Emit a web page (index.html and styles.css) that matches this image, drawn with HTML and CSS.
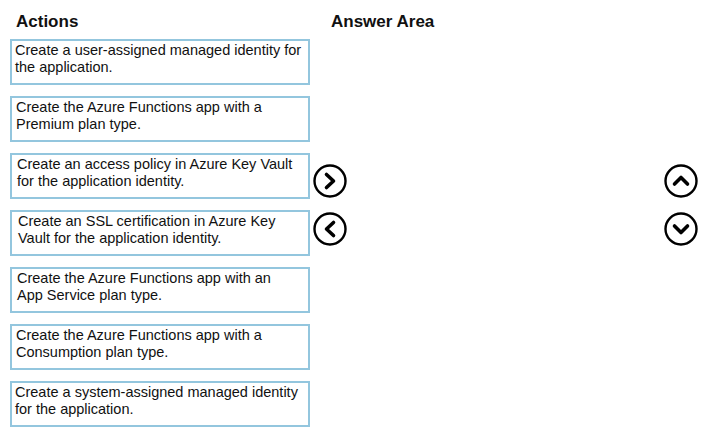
FILE: index.html
```html
<!DOCTYPE html>
<html>
<head>
<meta charset="utf-8">
<link rel="stylesheet" href="styles.css">
</head>
<body>
<div class="page">
  <section class="actions">
    <h2 class="title">Actions</h2>
    <ul class="list">
      <li class="item">Create a user-assigned managed identity for the application.</li>
      <li class="item item--in1">Create the Azure Functions app with a Premium plan type.</li>
      <li class="item item--in2">Create an access policy in Azure Key Vault for the application identity.</li>
      <li class="item item--in3">Create an SSL certification in Azure Key Vault for the application identity.</li>
      <li class="item item--in2 item--narrow">Create the Azure Functions app with an App Service plan type.</li>
      <li class="item item--in1">Create the Azure Functions app with a Consumption plan type.</li>
      <li class="item">Create a system-assigned managed identity for the application.</li>
    </ul>
  </section>
  <section class="answer">
    <h2 class="title answer-title">Answer Area</h2>
    <div class="controls">
      <div class="btns">
        <span class="btn"><svg viewBox="0 0 34 34" width="34" height="34"><circle cx="17" cy="17" r="15.5" fill="none" stroke="#000" stroke-width="2.4"/><path d="M13.5 10.5 L20.5 17 L13.5 23.5" fill="none" stroke="#000" stroke-width="3.6" stroke-linecap="round" stroke-linejoin="round"/></svg></span>
        <span class="btn"><svg viewBox="0 0 34 34" width="34" height="34"><circle cx="17" cy="17" r="15.5" fill="none" stroke="#000" stroke-width="2.4"/><path d="M20.5 10.5 L13.5 17 L20.5 23.5" fill="none" stroke="#000" stroke-width="3.6" stroke-linecap="round" stroke-linejoin="round"/></svg></span>
      </div>
      <div class="btns">
        <span class="btn"><svg viewBox="0 0 34 34" width="34" height="34"><circle cx="17" cy="17" r="15.5" fill="none" stroke="#000" stroke-width="2.4"/><path d="M10.5 20 L17 13.5 L23.5 20" fill="none" stroke="#000" stroke-width="3.6" stroke-linecap="round" stroke-linejoin="round"/></svg></span>
        <span class="btn"><svg viewBox="0 0 34 34" width="34" height="34"><circle cx="17" cy="17" r="15.5" fill="none" stroke="#000" stroke-width="2.4"/><path d="M10.5 14 L17 20.5 L23.5 14" fill="none" stroke="#000" stroke-width="3.6" stroke-linecap="round" stroke-linejoin="round"/></svg></span>
      </div>
    </div>
  </section>
</div>
</body>
</html>
```

FILE: styles.css
```css
html, body {
  margin: 0;
  padding: 0;
  background: #fff;
}
body {
  font-family: "Liberation Sans", Arial, sans-serif;
  color: #111;
  width: 718px;
  height: 442px;
  overflow: hidden;
}
.page {
  display: flex;
  padding: 12px 0 0 10px;
}
.actions {
  width: 300px;
  flex: none;
}
.title {
  margin: 0;
  font-size: 17px;
  font-weight: bold;
  line-height: 20px;
  padding-left: 6px;
  height: 27px;
  color: #111;
}
.list {
  list-style: none;
  margin: 0;
  padding: 0;
  display: flex;
  flex-direction: column;
  gap: 11px;
}
.item {
  box-sizing: border-box;
  height: 46px;
  border: 2px solid #93c6de;
  padding: 1px 4px 0 3px;
  font-size: 14.5px;
  line-height: 17px;
  color: #111;
}
.item--in1 {
  padding-left: 4px;
}
.item--in2 {
  padding-left: 5px;
}
.item--in3 {
  padding-left: 6px;
}
.item--narrow {
  padding-right: 24px;
}
.answer {
  flex: 1;
  padding-left: 3px;
}
.answer-title {
  padding-left: 18px;
}
.controls {
  display: flex;
  justify-content: space-between;
  padding-top: 125px;
  padding-right: 20px;
}
.btns {
  display: flex;
  flex-direction: column;
  gap: 14px;
}
.btn {
  display: block;
  width: 34px;
  height: 34px;
}
.btn svg {
  display: block;
}
```
